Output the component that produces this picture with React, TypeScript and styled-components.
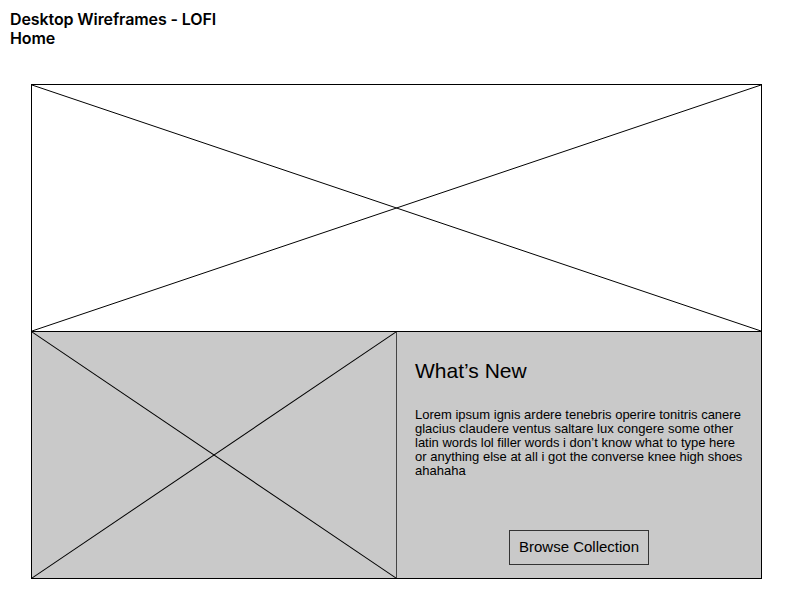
import styled, { createGlobalStyle } from 'styled-components'

const GlobalStyle = createGlobalStyle`
  html, body {
    margin: 0;
    padding: 0;
    background: #fff;
  }
  * {
    box-sizing: border-box;
  }
`

const Page = styled.div`
  width: 792px;
  height: 612px;
  padding: 10px 10px 0;
  background: #fff;
`

const Title = styled.h1`
  margin: 0;
  font-family: Inter, 'Liberation Sans', sans-serif;
  font-size: 16px;
  font-weight: 600;
  line-height: 19px;
  letter-spacing: -0.1px;
  color: #000;
`

const Frame = styled.div`
  width: 731px;
  margin: 36px 0 0 21px;
  border: 1px solid #000;
`

const Hero = styled.div`
  height: 246px;
  position: relative;
`

const Split = styled.div`
  display: grid;
  grid-template-columns: 365px 1fr;
  height: 247px;
  border-top: 1px solid #000;
  background: #c9c9c9;
`

const ImageBox = styled.div`
  position: relative;
  border-right: 1px solid #444;
`

const Cross = styled.svg`
  position: absolute;
  inset: 0;
  width: 100%;
  height: 100%;
  display: block;
`

const Panel = styled.div`
  display: flex;
  flex-direction: column;
  padding: 27px 18px 13px 18px;
  font-family: 'Liberation Sans', Arial, sans-serif;
  color: #000;
`

const Heading = styled.h2`
  margin: 0;
  font-size: 21px;
  font-weight: 400;
  line-height: 24px;
`

const Copy = styled.p`
  margin: 25px 0 0;
  font-size: 13px;
  line-height: 14px;
  max-width: 332px;
`

const Button = styled.button`
  margin-top: auto;
  align-self: center;
  height: 35px;
  padding: 0 9px 3px;
  border: 1px solid #333;
  background: transparent;
  font-family: 'Liberation Sans', Arial, sans-serif;
  font-size: 15px;
  color: #000;
`

function Placeholder() {
  return (
    <Cross viewBox="0 0 100 100" preserveAspectRatio="none">
      <line x1="0" y1="0" x2="100" y2="100" stroke="#000" strokeWidth="1" vectorEffect="non-scaling-stroke" />
      <line x1="100" y1="0" x2="0" y2="100" stroke="#000" strokeWidth="1" vectorEffect="non-scaling-stroke" />
    </Cross>
  )
}

function App() {
  return (
    <Page>
      <GlobalStyle />
      <Title>
        Desktop Wireframes - LOFI
        <br />
        Home
      </Title>
      <Frame>
        <Hero>
          <Placeholder />
        </Hero>
        <Split>
          <ImageBox>
            <Placeholder />
          </ImageBox>
          <Panel>
            <Heading>What’s New</Heading>
            <Copy>
              Lorem ipsum ignis ardere tenebris operire tonitris canere glacius claudere ventus
              saltare lux congere some other latin words lol filler words i don’t know what to
              type here or anything else at all i got the converse knee high shoes ahahaha
            </Copy>
            <Button type="button">Browse Collection</Button>
          </Panel>
        </Split>
      </Frame>
    </Page>
  )
}

export default App
